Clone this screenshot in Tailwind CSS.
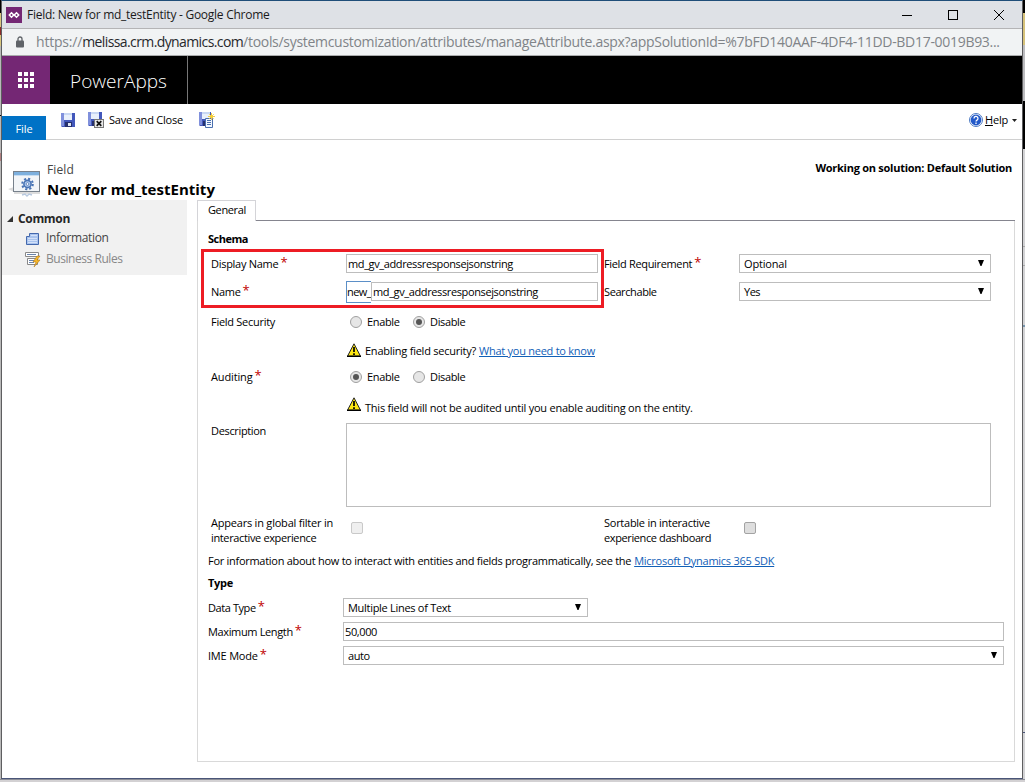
<!DOCTYPE html>
<html lang="en">
<head>
<meta charset="utf-8">
<title>Field: New for md_testEntity</title>
<script src="https://cdn.jsdelivr.net/npm/@tailwindcss/browser@4"></script>
</head>
<body class="h-[782px] w-[1025px] overflow-hidden bg-[#d3d1d3] font-['Open_Sans','Noto_Sans',sans-serif] text-[11px] leading-[15px] tracking-[-0.26px] text-black">
<div class="flex h-[779px]">
  <div class="flex w-px flex-col bg-[#b9b9b9]">
    <div class="h-[13px] bg-black"></div><div class="h-[14px] bg-[#d9c77c]"></div><div class="h-[8px] bg-[#8c2a2a]"></div><div class="h-[11px] bg-[#d9c77c]"></div><div class="h-[69px]"></div><div class="h-px bg-black"></div><div class="h-[37px]"></div><div class="h-[8px] bg-[#b07f7f]"></div>
  </div>
  <div class="flex w-[1022px] shrink-0 flex-col border-x border-t border-b border-x-[#5e5e60] border-t-[#1f4e79] border-b-[#4a5578] bg-white">
    <div class="flex h-[28px] shrink-0 items-center border-b border-[#b4b4b6] bg-[#dee1e6] pl-[4px]">
      <svg class="h-4 w-4" viewBox="0 0 16 16"><rect width="16" height="16" fill="#742774"/><path d="M5.500 5.800 7.700 8 5.500 10.200 3.300 8z M10.500 5.800 12.700 8 10.500 10.200 8.300 8z" fill="none" stroke="#fff" stroke-width="1.500"/></svg>
      <span class="ml-[5px] text-[12px] whitespace-nowrap text-[#1a1a1a]">Field: New for md_testEntity - Google Chrome</span>
      <svg class="ml-auto h-[28px] w-[130px]" viewBox="0 0 130 28" fill="none" stroke="#000" shape-rendering="crispEdges"><path d="M10 14.500h10"/><rect x="56.500" y="9.500" width="9" height="9"/><path d="M102 9l10 10M112 9l-10 10" shape-rendering="auto"/></svg>
    </div>
    <div class="flex h-[27px] shrink-0 items-center border-b border-[#a9abac] bg-[#f1f3f4] pl-[14px]">
      <svg class="h-[12px] w-[8px]" viewBox="0 0 8 12"><path d="M2 5V3a2 2 0 0 1 4 0v2" fill="none" stroke="#5f6368" stroke-width="1.300"/><rect y="4.500" width="8" height="7" rx="1" fill="#5f6368"/></svg>
      <div class="ml-[12px] flex pb-px text-[14px] leading-[20px] whitespace-nowrap text-[#808488]"><span class="tracking-[-0.2px]">https://</span><span class="tracking-[-0.6px] text-[#26282b]">melissa.crm.dynamics.com</span><span class="tracking-[-0.3px]">/tools/systemcustomization/attributes/manageAttribute.aspx?appSolutionId=%7bFD140AAF-4DF4-11DD-BD17-0019B93...</span></div>
    </div>
    <div class="flex h-[48px] shrink-0 bg-black">
      <div class="flex w-[48px] items-center justify-center bg-[#742774]">
        <svg class="h-4 w-4" viewBox="0 0 16 16" fill="#fff" shape-rendering="crispEdges"><path d="M0 0h4v4H0zM6 0h4v4H6zM12 0h4v4h-4zM0 6h4v4H0zM6 6h4v4H6zM12 6h4v4h-4zM0 12h4v4H0zM6 12h4v4H6zM12 12h4v4h-4z"/></svg>
      </div>
      <div class="flex w-[138px] items-center border-r border-[#777] pt-px pl-[20px]"><span class="text-[19px] leading-[26px] font-light tracking-[0.03px] whitespace-nowrap text-white">PowerApps</span></div>
    </div>
    <div class="flex h-[36px] shrink-0 border-b border-[#d0d0d0]">
      <div class="mt-[12px] flex h-[24px] w-[44px] items-center justify-center bg-[#0072c6] tracking-[-0.1px] text-white">File</div>
      <div class="flex h-[32px] items-center">
        <svg class="ml-[15px] h-[14px] w-[14px]" viewBox="0 0 14 14"><path d="M0 0h14v14H1L0 13z" fill="#4257bb"/><path d="M0 0h3v13H0z" fill="#8090dc"/><path d="M3 0h8v7H3z" fill="#e9f0fb"/><path d="M3 0h8v2H3z" fill="#c9d8f3"/><path d="M4 9h7v5H4z" fill="#26306e"/><path d="M7 10h3v3H7z" fill="#dfe6f5"/></svg>
        <svg class="ml-[13px] h-[16px] w-[16px]" viewBox="0 0 16 16"><path d="M0 0h14v14H1L0 13z" fill="#4257bb"/><path d="M0 0h3v13H0z" fill="#8090dc"/><path d="M3 0h8v7H3z" fill="#e9f0fb"/><path d="M3 0h8v2H3z" fill="#c9d8f3"/><path d="M4 9h4v5H4z" fill="#26306e"/><rect x="6.500" y="7.500" width="9" height="8" fill="#e8e8e8" stroke="#777"/><path d="M8.700 9.200l4.600 4.600M13.300 9.200l-4.600 4.600" stroke="#111" stroke-width="1.700"/></svg>
        <span class="ml-[5px] pb-px tracking-[-0.2px] whitespace-nowrap">Save and Close</span>
        <svg class="ml-[16px] h-[16px] w-[16px]" viewBox="0 0 16 16"><path d="M0 0h12v14H1L0 13z" fill="#4257bb"/><path d="M0 0h3v13H0z" fill="#8090dc"/><path d="M3 0h8v7H3z" fill="#e9f0fb"/><path d="M3 0h8v2H3z" fill="#c9d8f3"/><path d="M4 9h3v5H4z" fill="#26306e"/><path d="M6.500 6.500h7v9h-7z" fill="#f4f8ff" stroke="#4a6fae"/><path d="M8 8.500h4M8 10.500h4M8 12.500h4" stroke="#4a6fae"/><path d="M12.500 1v7M9 4.500h7M10.300 2.300l4.400 4.400M14.700 2.300l-4.400 4.400" stroke="#f2cc3c"/></svg>
      </div>
      <div class="ml-auto flex h-[32px] items-center pr-[5px]">
        <svg class="h-[14px] w-[14px]" viewBox="0 0 14 14"><circle cx="7" cy="7" r="6.500" fill="#fff" stroke="#4d7bc4"/><circle cx="7" cy="7" r="5.400" fill="#2259c9"/><path d="M5 5.400a2 2 0 1 1 3 1.700c-.8.500-1 .8-1 1.500M7 9.600v1.400" fill="none" stroke="#fff" stroke-width="1.300"/></svg>
        <span class="ml-[2px] pb-px tracking-[-0.2px]"><span class="underline">H</span>elp</span>
        <svg class="ml-[4px] h-[3px] w-[5px]" viewBox="0 0 5 3"><path d="M0 0h5L2.500 3z" fill="#222"/></svg>
      </div>
    </div>
    <div class="flex h-[60px] shrink-0">
      <svg class="mt-[30px] ml-[6px] h-[28px] w-[34px]" viewBox="0 0 34 28"><path d="M0 19l6-2v5zM6 22h26v2H6z" fill="#bbb" opacity=".5"/><rect x="5.500" y="1.500" width="26" height="20" fill="#f2f5f8" stroke="#77818c"/><path d="M6 2h25v3H6z" fill="#7db0de"/><path d="M6 5h25v1H6z" fill="#c8ddf0"/><circle cx="19.500" cy="14" r="5.300" fill="none" stroke="#4773b4" stroke-width="2" stroke-dasharray="2.100 2.060"/><circle cx="19.500" cy="14" r="3.600" fill="#b5cdee" stroke="#4773b4" stroke-width="1.600"/><circle cx="19.500" cy="14" r="1.400" fill="#fff" stroke="#4773b4" stroke-width=".8"/><path d="M14 25l3-1 2 2 2-2 3 1" fill="none" stroke="#b8c9df" stroke-width="1.500"/></svg>
      <div class="mt-[20px] ml-[5px] flex flex-col">
        <div class="h-[19px] text-[12px] leading-[20px] tracking-[0.13px] text-[#444]">Field</div>
        <div class="h-[20px] text-[15px] leading-[20px] font-bold tracking-[0.01px] whitespace-nowrap">New for md_testEntity</div>
      </div>
      <div class="mt-[20px] mr-[10px] ml-auto font-bold whitespace-nowrap">Working on solution: Default Solution</div>
    </div>
    <div class="flex flex-1">
      <div class="h-[75px] w-[185px] shrink-0 bg-[#f1f1f1] pt-[9px] text-[12px] tracking-[-0.33px]">
        <div class="flex h-[20px] items-center pl-[5px] font-bold text-[#262626]"><svg class="h-[6px] w-[6px]" viewBox="0 0 6 6"><path d="M6 0v6H0z" fill="#333"/></svg><span class="ml-[5px] pb-[2px]">Common</span></div>
        <div class="flex h-[19px] items-center pl-[24px] text-[#444]"><svg class="h-[12px] w-[13px]" viewBox="0 0 13 12"><path d="M3.500.5h9v11h-12v-8h3z" fill="#a9c4ee" stroke="#4468ad"/><path d="M5 2.500h6M2 5.500h9M2 7.500h9M2 9.500h9" stroke="#dfe9fb" stroke-width=".8"/></svg><span class="ml-[7px] pb-[3px] tracking-[-0.37px]">Information</span></div>
        <div class="flex h-[22px] items-center pl-[23px] text-[#888]"><svg class="h-[15px] w-[16px]" viewBox="0 0 16 15"><path d="M.5.500h13v4H.5zM2.500 6.500h10v6h-10z" fill="#fff" stroke="#888"/><path d="M2 2.500h9M4 8.500h6M4 10.500h5" stroke="#6a84ad"/><path d="M12 4l-4 6h3l-2 5 6-7h-3l3-4z" fill="#f5b72a" stroke="#a86e10" stroke-width=".5"/></svg><span class="ml-[5px] pb-px tracking-[-0.45px] whitespace-nowrap">Business Rules</span></div>
      </div>
      <div class="ml-[10px] flex w-[818px] flex-col">
        <div class="flex h-[21px] shrink-0">
          <div class="w-[59px] border-x border-t border-[#d4d4d8] pt-px pl-[10px] tracking-[-0.38px]">General</div>
          <div class="flex-1 border-b border-[#85858f]"></div>
        </div>
        <div class="relative h-[541px] border-x border-b border-[#d9d9d9]">
          <div class="mt-[9px] flex h-[18px] items-center pb-[2px] pl-[10px] font-bold tracking-[-0.48px]">Schema</div>
          <div class="mt-[2px] flex h-[28px] items-center pb-px pl-[13px]">
            <div class="flex w-[135px]"><span class="tracking-[-0.28px] whitespace-nowrap">Display Name</span><span class="-mt-px ml-[2px] text-[13px] leading-[14px] text-[#c00000]">*</span></div>
            <div class="flex h-[19px] w-[252px] items-center border border-[#bdbdbd] pl-px tracking-[-0.38px]">md_gv_addressresponsejsonstring</div>
            <div class="ml-[6px] flex w-[135px]"><span class="tracking-[-0.34px] whitespace-nowrap">Field Requirement</span><span class="-mt-px ml-[2px] text-[13px] leading-[14px] text-[#c00000]">*</span></div>
            <div class="flex h-[19px] w-[252px] items-center border border-[#bdbdbd] pl-[4px]"><span class="tracking-[-0.18px]">Optional</span><svg class="mr-[6px] mb-[2px] ml-auto h-[6px] w-[6px]" viewBox="0 0 6 6"><path d="M0 0h6L3.500 6h-1z"/></svg></div>
          </div>
          <div class="flex h-[28px] items-center pb-px pl-[13px]">
            <div class="flex w-[135px]"><span class="tracking-[-0.3px]">Name</span><span class="-mt-px ml-[2px] text-[13px] leading-[14px] text-[#c00000]">*</span></div>
            <div class="flex h-[22px] w-[25px] items-center border-y border-l border-[#5b8fc7] tracking-[-0.57px]">new_</div>
            <div class="flex h-[19px] w-[227px] items-center border border-[#bdbdbd] pl-px tracking-[-0.38px]">md_gv_addressresponsejsonstring</div>
            <div class="ml-[6px] w-[135px] tracking-[-0.4px]">Searchable</div>
            <div class="flex h-[19px] w-[252px] items-center border border-[#bdbdbd] pl-[4px]"><span class="tracking-[-0.52px]">Yes</span><svg class="mr-[6px] mb-[2px] ml-auto h-[6px] w-[6px]" viewBox="0 0 6 6"><path d="M0 0h6L3.500 6h-1z"/></svg></div>
          </div>
          <div class="mt-[2px] flex h-[28px] items-center pb-[2px] pl-[13px]">
            <div class="w-[135px] tracking-[-0.28px]">Field Security</div>
            <div class="ml-[4px] flex w-[63px] items-center tracking-[-0.35px]"><i class="mt-[2px] mr-[5px] h-[12px] w-[12px] rounded-full border border-[#a0a0a0] bg-[#e6e6e6]"></i>Enable</div>
            <div class="flex items-center tracking-[-0.35px]"><i class="mt-[2px] mr-[5px] flex h-[12px] w-[12px] items-center justify-center rounded-full border border-[#a0a0a0] bg-[#e6e6e6]"><b class="h-[6px] w-[6px] rounded-full bg-[#555]"></b></i>Disable</div>
          </div>
          <div class="flex h-[30px] items-center pb-[2px] pl-[149px]">
            <svg class="h-[14px] w-[14px]" viewBox="0 0 14 14"><path d="M7 .8L13.400 13H.6z" fill="#ffe813" stroke="#222"/><path d="M0 13.500h14M7 4v5M7 10.300v1.700" stroke="#000" stroke-width="1.700"/></svg>
            <span class="ml-[4px] tracking-[-0.24px] whitespace-nowrap">Enabling field security?</span><a class="ml-[3px] tracking-[-0.25px] whitespace-nowrap text-[#1160b7] underline">What you need to know</a>
          </div>
          <div class="flex h-[22px] items-center pb-[2px] pl-[13px]">
            <div class="flex w-[135px]"><span class="tracking-[-0.14px]">Auditing</span><span class="-mt-px ml-[2px] text-[13px] leading-[14px] text-[#c00000]">*</span></div>
            <div class="ml-[4px] flex w-[63px] items-center tracking-[-0.35px]"><i class="mt-[2px] mr-[5px] flex h-[12px] w-[12px] items-center justify-center rounded-full border border-[#a0a0a0] bg-[#e6e6e6]"><b class="h-[6px] w-[6px] rounded-full bg-[#555]"></b></i>Enable</div>
            <div class="flex items-center tracking-[-0.35px]"><i class="mt-[2px] mr-[5px] h-[12px] w-[12px] rounded-full border border-[#a0a0a0] bg-[#e6e6e6]"></i>Disable</div>
          </div>
          <div class="flex h-[35px] items-center pt-[3px] pl-[149px]">
            <svg class="mb-[7px] h-[14px] w-[14px]" viewBox="0 0 14 14"><path d="M7 .8L13.400 13H.6z" fill="#ffe813" stroke="#222"/><path d="M0 13.500h14M7 4v5M7 10.300v1.700" stroke="#000" stroke-width="1.700"/></svg>
            <span class="ml-[4px] tracking-[-0.23px] whitespace-nowrap">This field will not be audited until you enable auditing on the entity.</span>
          </div>
          <div class="flex h-[84px] pl-[13px]">
            <div class="w-[135px] tracking-[-0.34px]">Description</div>
            <div class="w-[645px] border border-[#bdbdbd]"></div>
          </div>
          <div class="mt-[8px] flex h-[31px] pl-[13px]">
            <div class="w-[140px] whitespace-nowrap"><div class="tracking-[-0.21px]">Appears in global filter in</div><div class="tracking-[-0.36px]">interactive experience</div></div>
            <i class="mt-[7px] h-[12px] w-[12px] rounded-[2px] border border-[#c9c9c9] bg-[#efefef]"></i>
            <div class="ml-[241px] w-[140px] whitespace-nowrap"><div>Sortable in interactive</div><div class="tracking-[-0.39px]">experience dashboard</div></div>
            <i class="mt-[7px] h-[12px] w-[12px] rounded-[2px] border border-[#a3a3a3] bg-[#dedede]"></i>
          </div>
          <div class="flex h-[30px] items-center pb-[2px] pl-[10px] whitespace-nowrap"><span class="tracking-[-0.28px]">For information about how to interact with entities and fields programmatically, see the</span><a class="ml-[3px] tracking-[-0.25px] text-[#1160b7] underline">Microsoft Dynamics 365 SDK</a></div>
          <div class="flex h-[14px] items-center pb-[2px] pl-[10px] font-bold">Type</div>
          <div class="mt-[6px] flex h-[24px] items-center pb-px pl-[10px]">
            <div class="flex w-[135px]"><span class="tracking-[-0.42px] whitespace-nowrap">Data Type</span><span class="-mt-px ml-[2px] text-[13px] leading-[14px] text-[#c00000]">*</span></div>
            <div class="flex h-[19px] w-[245px] items-center border border-[#bdbdbd] pl-[4px]"><span class="tracking-[-0.29px]">Multiple Lines of Text</span><svg class="mr-[6px] mb-[2px] ml-auto h-[6px] w-[6px]" viewBox="0 0 6 6"><path d="M0 0h6L3.500 6h-1z"/></svg></div>
          </div>
          <div class="flex h-[24px] items-center pb-px pl-[10px]">
            <div class="flex w-[135px]"><span class="tracking-[-0.36px] whitespace-nowrap">Maximum Length</span><span class="-mt-px ml-[2px] text-[13px] leading-[14px] text-[#c00000]">*</span></div>
            <div class="flex h-[19px] w-[661px] items-center border border-[#bdbdbd] pl-px tracking-[-0.38px]">50,000</div>
          </div>
          <div class="flex h-[24px] items-center pb-px pl-[10px]">
            <div class="flex w-[135px]"><span class="tracking-[-0.2px] whitespace-nowrap">IME Mode</span><span class="-mt-px ml-[2px] text-[13px] leading-[14px] text-[#c00000]">*</span></div>
            <div class="flex h-[19px] w-[661px] items-center border border-[#bdbdbd] pl-[4px]"><span class="tracking-[-0.4px]">auto</span><svg class="mr-[6px] mb-[2px] ml-auto h-[6px] w-[6px]" viewBox="0 0 6 6"><path d="M0 0h6L3.500 6h-1z"/></svg></div>
          </div>
          <div class="absolute top-[28px] left-[3px] h-[59px] w-[403px] border-[3px] border-[#ed1c24]"></div>
        </div>
      </div>
    </div>
  </div>
  <div class="flex flex-1 flex-col bg-[#d3d3d5]">
    <div class="h-[13px] bg-black"></div><div class="h-[32px] bg-[#d6c27a]"></div><div class="h-[56px] bg-[#bdbdc0]"></div><div class="h-[48px] bg-black"></div><div class="h-[98px] border-b border-[#aaa]"></div><div class="h-[19px] border-b border-[#aaa]"></div><div class="h-[59px]"></div><div class="h-[2px] bg-[#7795ad]"></div><div class="h-[406px] border-b border-[#4a5578]"></div>
  </div>
</div>
<div class="h-px bg-[#8d8f98]"></div>
</body>
</html>
